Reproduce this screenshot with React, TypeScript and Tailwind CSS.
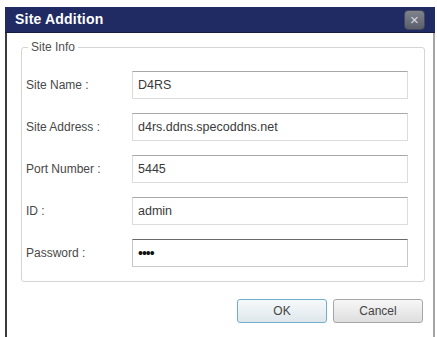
import { useState } from 'react';

const fields = [
  { label: 'Site Name :', value: 'D4RS' },
  { label: 'Site Address :', value: 'd4rs.ddns.specoddns.net' },
  { label: 'Port Number :', value: '5445' },
  { label: 'ID :', value: 'admin' },
];

export default function App() {
  const [password, setPassword] = useState('1234');

  return (
    <div className="w-[437px] h-[337px] bg-white pt-[7px] pl-[5px] overflow-hidden font-['Liberation_Sans',Arial,sans-serif]">
      <div className="w-[430px] flex flex-col">
        <div className="h-[26px] bg-[#1f2b62] border-b border-b-[#141c40] flex items-center justify-between pl-[10px] pr-[10px]">
          <span className="text-white font-bold text-[14px] tracking-[0.2px]">Site Addition</span>
          <div className="w-[21px] h-[20px] rounded-[4px] bg-gradient-to-b from-[#80848f] to-[#5a5e6a] border border-[#444856] flex items-center justify-center text-[#d8dae0] text-[15px] leading-none">
            ×
          </div>
        </div>

        <div className="h-[304px] bg-white border-l-2 border-l-[#3c3c3c] border-r-2 border-r-[#a4a4a4] pt-[7px]">
          <fieldset className="ml-[14px] w-[402px] border border-[#d4d4d4] rounded-[3px] pl-[4px] pr-[16px] pb-[14px]">
            <legend className="ml-[2px] px-[3px] text-[12px] leading-[14px] text-[#505050]">Site Info</legend>
            <div className="flex flex-col gap-[14px] pt-[17px]">
              {fields.map(f => (
                <div key={f.label} className="flex items-center h-[28px]">
                  <label className="w-[106px] text-[12px] text-[#484848]">{f.label}</label>
                  <input
                    defaultValue={f.value}
                    className="w-[276px] h-[28px] border border-[#dcdcdc] border-t-[#a8a8a8] px-[5px] text-[12.5px] text-[#3a3a3a] outline-none"
                  />
                </div>
              ))}
              <div className="flex items-center h-[28px]">
                <label className="w-[106px] text-[12px] text-[#484848]">Password :</label>
                <input
                  type="password"
                  autoFocus
                  value={password}
                  onChange={e => setPassword(e.target.value)}
                  className="w-[276px] h-[28px] border border-[#c8c8c8] border-t-[#6a6a6a] px-[5px] text-[14px] tracking-[-1px] text-[#111] caret-black outline-none"
                />
              </div>
            </div>
          </fieldset>

          <div className="flex justify-end gap-[6px] mt-[17px] w-[416px]">
            <button className="w-[90px] h-[24px] rounded-[3px] border border-[#6fb0c9] bg-gradient-to-b from-[#f6f9fb] to-[#dfe7ec] text-[12px] text-[#444]">
              OK
            </button>
            <button className="w-[90px] h-[24px] rounded-[3px] border border-[#a6a6a6] bg-gradient-to-b from-[#f7f7f7] to-[#dedede] text-[12px] text-[#444]">
              Cancel
            </button>
          </div>
        </div>
      </div>
    </div>
  );
}
